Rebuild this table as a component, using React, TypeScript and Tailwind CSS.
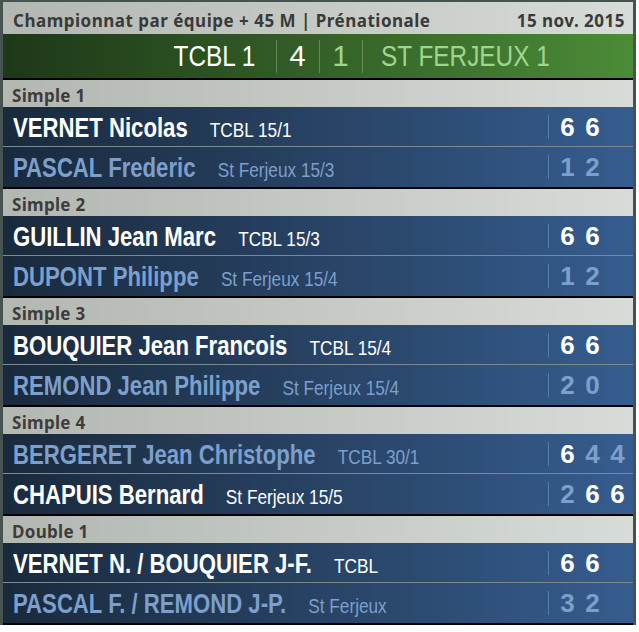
import React from 'react'

type Row = { name: string; club: string; scores: number[] }
type Section = { title: string; rows: [Row, Row] }

const sections: Section[] = [
  { title: 'Simple 1', rows: [
    { name: 'VERNET Nicolas', club: 'TCBL 15/1', scores: [6, 6] },
    { name: 'PASCAL Frederic', club: 'St Ferjeux 15/3', scores: [1, 2] },
  ] },
  { title: 'Simple 2', rows: [
    { name: 'GUILLIN Jean Marc', club: 'TCBL 15/3', scores: [6, 6] },
    { name: 'DUPONT Philippe', club: 'St Ferjeux 15/4', scores: [1, 2] },
  ] },
  { title: 'Simple 3', rows: [
    { name: 'BOUQUIER Jean Francois', club: 'TCBL 15/4', scores: [6, 6] },
    { name: 'REMOND Jean Philippe', club: 'St Ferjeux 15/4', scores: [2, 0] },
  ] },
  { title: 'Simple 4', rows: [
    { name: 'BERGERET Jean Christophe', club: 'TCBL 30/1', scores: [6, 4, 4] },
    { name: 'CHAPUIS Bernard', club: 'St Ferjeux 15/5', scores: [2, 6, 6] },
  ] },
  { title: 'Double 1', rows: [
    { name: 'VERNET N. / BOUQUIER J-F.', club: 'TCBL', scores: [6, 6] },
    { name: 'PASCAL F. / REMOND J-P.', club: 'St Ferjeux', scores: [3, 2] },
  ] },
]

// no narrow font installed: Arial metrics squeezed horizontally
const arial = "font-['Liberation_Sans',Arial,sans-serif]"
const ui = "font-['Noto_Sans','Open_Sans',sans-serif]"

function sets(a: number[], b: number[]) {
  return a.filter((s, i) => s > b[i]).length
}

function PlayerRow({ row, other, last }: { row: Row; other: Row; last: boolean }) {
  const won = sets(row.scores, other.scores) > sets(other.scores, row.scores)
  const cells = [0, 1, 2]
  return (
    <div className={`flex items-center bg-gradient-to-r from-[#1a2a3d] to-[#365d8f] ${last ? 'h-[42px] border-b-2 border-black' : 'h-[40px] border-b border-[#7b8a90]'}`}>
      <div className={`flex-1 min-w-0 pl-[10px] pt-[5px] ${arial} ${won ? 'text-white' : 'text-[#7c9fcc]'}`}>
        <div className="inline-flex items-baseline whitespace-nowrap origin-left scale-x-[0.82]">
          <span className="text-[27px] font-bold leading-none">{row.name}</span>
          <span className="text-[21px] leading-none ml-[27px]">{row.club}</span>
        </div>
      </div>
      <div className="w-px h-[24px] bg-[#5c7ca3]" />
      <div className={`flex ml-[6px] mr-[3px] ${arial}`}>
        {cells.map(i => (
          <div key={i} className={`w-[25px] text-center text-[26px] font-bold leading-none ${row.scores[i] !== undefined && row.scores[i] > other.scores[i] ? 'text-white' : 'text-[#7c9fcc]'}`}>
            {row.scores[i] ?? ''}
          </div>
        ))}
      </div>
    </div>
  )
}

export default function App() {
  return (
    <div className="w-[636px] bg-white">
      <div className="border-x-[3px] border-t-2 border-[#46524f]">
        <div className={`h-[32px] flex items-center justify-between pt-[6px] pl-[10px] pr-[8px] bg-gradient-to-r from-[#b3b7b1] to-[#d8dcd8] text-[#3a3a3a] font-bold text-[17px] tracking-[0.5px] ${ui}`}>
          <span>Championnat par équipe + 45 M | Prénationale</span>
          <span>15 nov. 2015</span>
        </div>
        <div className={`h-[46px] flex items-center border-b-2 border-black bg-gradient-to-r from-[#1e3818] to-[#4b8c37] text-[29px] leading-none ${arial}`}>
          <div className="flex-1 flex justify-end pr-[20px] text-white">
            <span className="inline-block origin-right scale-x-[0.84]">TCBL 1</span>
          </div>
          <div className="w-px h-[33px] bg-white/25" />
          <div className="w-[42px] text-center text-white">4</div>
          <div className="w-px h-[33px] bg-white/25" />
          <div className="w-[42px] text-center text-[#9fd68e]">1</div>
          <div className="w-px h-[33px] bg-white/25" />
          <div className="flex-1 pl-[18px] text-[#9fd68e]">
            <span className="inline-block origin-left scale-x-[0.84]">ST FERJEUX 1</span>
          </div>
        </div>
        {sections.map(s => (
          <div key={s.title}>
            <div className={`h-[27px] flex items-center pt-[4px] pl-[9px] bg-gradient-to-r from-[#b3b7b1] to-[#d8dcd8] text-[#3d3d3d] font-bold text-[17px] tracking-[0.3px] ${ui}`}>
              {s.title}
            </div>
            <PlayerRow row={s.rows[0]} other={s.rows[1]} last={false} />
            <PlayerRow row={s.rows[1]} other={s.rows[0]} last={true} />
          </div>
        ))}
      </div>
    </div>
  )
}
